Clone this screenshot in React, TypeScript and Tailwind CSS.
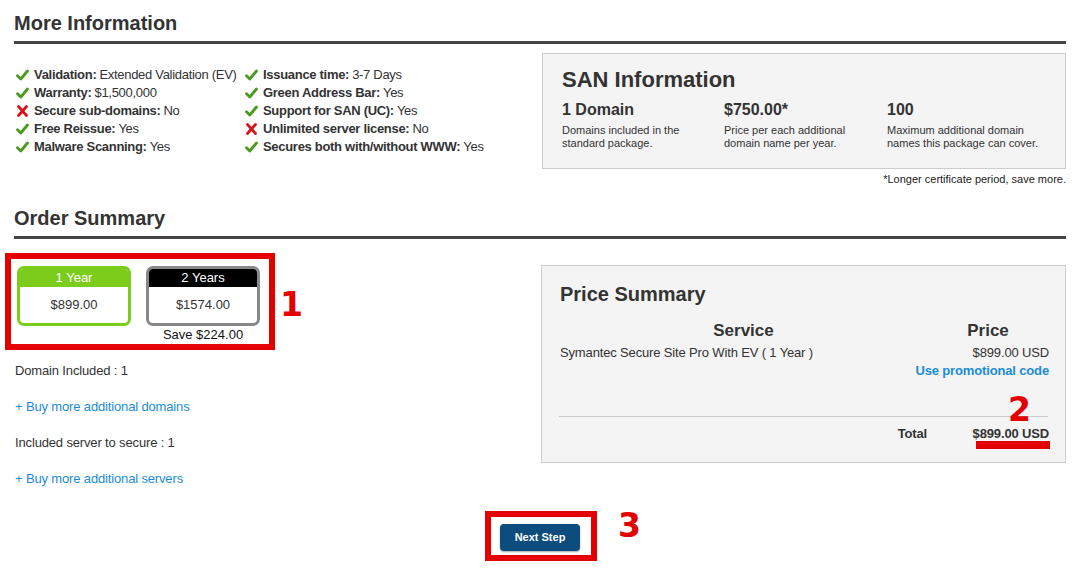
import React from 'react';

const Check = () => (
  <svg width="13" height="12" viewBox="0 0 13 12" className="shrink-0 mr-[5px]">
    <path d="M1.5 6.8 L4.8 10 L11.5 2" fill="none" stroke="#4a9a1d" strokeWidth="2.8" strokeLinecap="round" strokeLinejoin="round" />
  </svg>
);

const Cross = () => (
  <svg width="13" height="12" viewBox="0 0 13 12" className="shrink-0 mr-[5px]">
    <path d="M2.5 1.5 L10.5 10.5 M10.5 1.5 L2.5 10.5" fill="none" stroke="#d8141b" strokeWidth="2.8" strokeLinecap="round" />
  </svg>
);

const features = [
  { ok: true, label: 'Validation:', value: 'Extended Validation (EV)' },
  { ok: true, label: 'Issuance time:', value: '3-7 Days' },
  { ok: true, label: 'Warranty:', value: '$1,500,000' },
  { ok: true, label: 'Green Address Bar:', value: 'Yes' },
  { ok: false, label: 'Secure sub-domains:', value: 'No' },
  { ok: true, label: 'Support for SAN (UC):', value: 'Yes' },
  { ok: true, label: 'Free Reissue:', value: 'Yes' },
  { ok: false, label: 'Unlimited server license:', value: 'No' },
  { ok: true, label: 'Malware Scanning:', value: 'Yes' },
  { ok: true, label: 'Secures both with/without WWW:', value: 'Yes' },
];

const SectionTitle = ({ children }: { children: React.ReactNode }) => (
  <div>
    <h2 className="text-[20px] leading-[24px] font-bold text-[#333]">{children}</h2>
    <div className="mt-[6px] h-[3px] bg-[#444]" />
  </div>
);

const App = () => {
  return (
    <div className="relative w-[1086px] h-[571px] bg-white pl-[14px] pr-[20px] pt-[11px] font-['Liberation_Sans',Arial,sans-serif] text-[#333]">
      {/* More Information */}
      <SectionTitle>More Information</SectionTitle>

      <div className="flex mt-[9px]">
        <div className="w-[528px] pt-[13px] pl-[2px]">
          <div className="grid grid-cols-[229px_1fr]">
            {features.map((f, i) => (
              <div key={i} className="flex items-center h-[18px] text-[13px] leading-[18px] tracking-[-0.3px] whitespace-nowrap">
                {f.ok ? <Check /> : <Cross />}
                <span className="font-bold">{f.label}</span>
                <span className="ml-[3px]">{f.value}</span>
              </div>
            ))}
          </div>
        </div>

        <div className="w-[524px]">
          <div className="border border-[#ccc] bg-[#f4f4f4] pl-[19px] pt-[13px] pb-[18px]">
            <div className="text-[22px] leading-[26px] font-bold">SAN Information</div>
            <div className="flex mt-[7px]">
              <div className="w-[162px]">
                <div className="text-[16px] leading-[20px] font-bold">1 Domain</div>
                <div className="mt-[4px] text-[11px] leading-[13px]">Domains included in the<br />standard package.</div>
              </div>
              <div className="w-[163px]">
                <div className="text-[16px] leading-[20px] font-bold">$750.00*</div>
                <div className="mt-[4px] text-[11px] leading-[13px]">Price per each additional<br />domain name per year.</div>
              </div>
              <div>
                <div className="text-[16px] leading-[20px] font-bold">100</div>
                <div className="mt-[4px] text-[11px] leading-[13px]">Maximum additional domain<br />names this package can cover.</div>
              </div>
            </div>
          </div>
          <div className="mt-[4px] text-right text-[11px] leading-[13px] text-[#222]">*Longer certificate period, save more.</div>
        </div>
      </div>

      {/* Order Summary */}
      <div className="mt-[20px]">
        <SectionTitle>Order Summary</SectionTitle>
      </div>

      <div className="flex">
        <div className="w-[527px]">
          <div className="flex gap-[15px] pl-[3px] pt-[27px]">
            <div className="flex flex-col items-center">
              <div className="w-[114px] h-[60px] border-[3px] border-[#7ccc1c] rounded-[7px] overflow-hidden flex flex-col">
                <div className="h-[18px] bg-[#7ccc1c] text-white text-[13px] leading-[18px] text-center">1 Year</div>
                <div className="flex-1 flex items-center justify-center text-[13px]">$899.00</div>
              </div>
            </div>
            <div className="flex flex-col items-center">
              <div className="w-[114px] h-[60px] border-[3px] border-[#888] rounded-[7px] overflow-hidden flex flex-col">
                <div className="h-[18px] bg-black text-white text-[13px] leading-[18px] text-center">2 Years</div>
                <div className="flex-1 flex items-center justify-center text-[13px]">$1574.00</div>
              </div>
              <div className="mt-[1px] text-[13px] leading-[15px] text-[#111]">Save $224.00</div>
            </div>
          </div>

          <div className="pl-[1px] text-[13px] leading-[18px] tracking-[-0.15px]">
            <div className="mt-[20px]">Domain Included : 1</div>
            <a href="#" className="block mt-[18px] text-[#1a8cd8]">+ Buy more additional domains</a>
            <div className="mt-[18px]">Included server to secure : 1</div>
            <a href="#" className="block mt-[18px] text-[#1a8cd8]">+ Buy more additional servers</a>
          </div>
        </div>

        <div className="w-[525px] self-start mt-[26px] border border-[#ccc] bg-[#f4f4f4] pl-[18px] pr-[16px] pt-[16px] pb-[19px]">
          <div className="text-[20px] leading-[24px] font-bold">Price Summary</div>
          <div className="grid grid-cols-[367px_122px] mt-[15px]">
            <div className="text-[17px] leading-[20px] font-bold text-center">Service</div>
            <div className="text-[17px] leading-[20px] font-bold text-center">Price</div>
            <div className="mt-[3px] text-[13px] leading-[18px] tracking-[-0.15px]">Symantec Secure Site Pro With EV ( 1 Year )</div>
            <div className="mt-[3px] text-[13px] leading-[18px] tracking-[-0.15px] text-right">$899.00 USD</div>
            <a href="#" className="col-span-2 text-[13px] leading-[18px] text-right font-bold text-[#1a8cd8] tracking-[-0.15px]">Use promotional code</a>
          </div>
          <div className="mt-[36px] h-px bg-[#ccc] w-[489px] -ml-px" />
          <div className="grid grid-cols-[367px_122px] mt-[8px] text-[13px] leading-[18px] font-bold tracking-[-0.15px]">
            <div className="text-right">Total</div>
            <div className="text-right">$899.00 USD</div>
          </div>
        </div>
      </div>

      <div className="flex justify-center mt-[36px]">
        <button className="w-[80px] h-[27px] rounded-[4px] bg-[#0d4d7e] text-white text-[11px] font-bold shadow-[0_1px_2px_rgba(0,0,0,0.35)]">
          Next Step
        </button>
      </div>

      {/* annotation overlays */}
      <div className="absolute left-[5px] top-[253px] w-[270px] h-[97px] border-[6px] border-[#e50000]" />
      <div className="absolute left-[280px] top-[288px] text-[33px] leading-[33px] font-bold text-[#e50000] font-['DejaVu_Sans',sans-serif]">1</div>
      <div className="absolute left-[1008px] top-[393px] text-[33px] leading-[33px] font-bold text-[#e50000] font-['DejaVu_Sans',sans-serif]">2</div>
      <div className="absolute left-[976px] top-[441px] w-[74px] h-[8px] bg-[#e50000]" />
      <div className="absolute left-[485px] top-[511px] w-[112px] h-[50px] border-[6px] border-[#e50000]" />
      <div className="absolute left-[618px] top-[509px] text-[33px] leading-[33px] font-bold text-[#e50000] font-['DejaVu_Sans',sans-serif]">3</div>
    </div>
  );
};

export default App;
